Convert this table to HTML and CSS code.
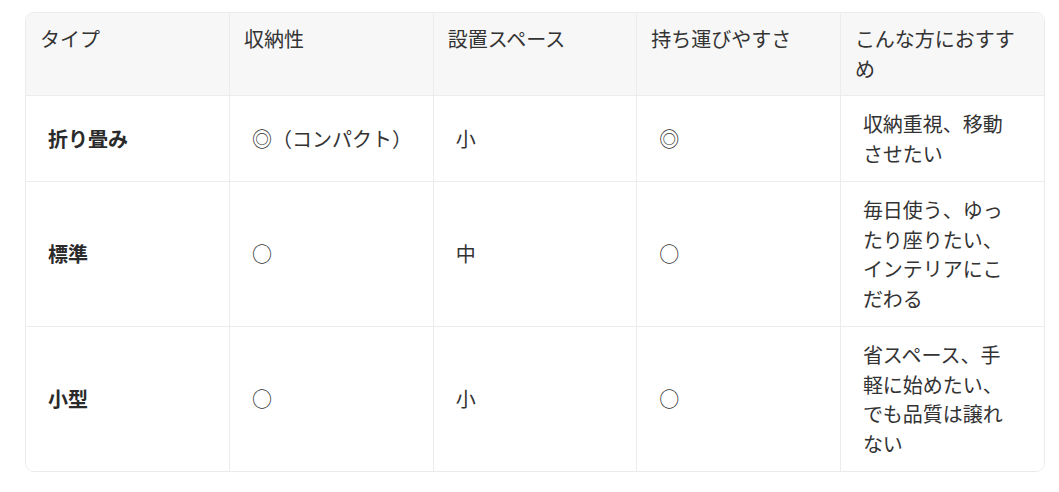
FILE: index.html
```html
<!DOCTYPE html>
<html lang="ja">
<head>
<meta charset="utf-8">
<title>タイプ比較</title>
<link rel="stylesheet" href="styles.css">
</head>
<body>
<div class="page">
  <div class="table-wrap">
    <table class="compare">
      <thead>
        <tr>
          <th>タイプ</th>
          <th>収納性</th>
          <th>設置スペース</th>
          <th>持ち運びやすさ</th>
          <th>こんな方におすすめ</th>
        </tr>
      </thead>
      <tbody>
        <tr>
          <td class="name">折り畳み</td>
          <td>◎（コンパクト）</td>
          <td>小</td>
          <td>◎</td>
          <td>収納重視、移動させたい</td>
        </tr>
        <tr>
          <td class="name">標準</td>
          <td>○</td>
          <td>中</td>
          <td>○</td>
          <td>毎日使う、ゆったり座りたい、インテリアにこだわる</td>
        </tr>
        <tr>
          <td class="name">小型</td>
          <td>○</td>
          <td>小</td>
          <td>○</td>
          <td>省スペース、手軽に始めたい、でも品質は譲れない</td>
        </tr>
      </tbody>
    </table>
  </div>
</div>
</body>
</html>
```

FILE: styles.css
```css
html, body {
  margin: 0;
  padding: 0;
  background: #ffffff;
}

.page {
  padding: 12px 14px 0 25px;
  font-family: "Noto Sans CJK JP", "Noto Sans", sans-serif;
  color: #333333;
}

.table-wrap {
  width: 1020px;
  border: 1px solid #ebebeb;
  border-radius: 9px;
  overflow: hidden;
  box-sizing: border-box;
}

.compare {
  width: 100%;
  border-collapse: collapse;
  table-layout: fixed;
  font-size: 20px;
}

.compare th,
.compare td {
  border-left: 1px solid #ececec;
  border-top: 1px solid #ececec;
  text-align: left;
}

.compare th:first-child,
.compare td:first-child {
  border-left: none;
}

.compare thead th {
  border-top: none;
  background: #f7f7f7;
  font-weight: 400;
  line-height: 30px;
  padding: 11px 14px 11px 14px;
  vertical-align: top;
  color: #333333;
}

.compare td {
  line-height: 29.5px;
  padding: 13px 24px 13px 22px;
  vertical-align: middle;
  background: #ffffff;
}

.compare td.name {
  font-weight: 700;
  color: #2a2a2a;
}
```
